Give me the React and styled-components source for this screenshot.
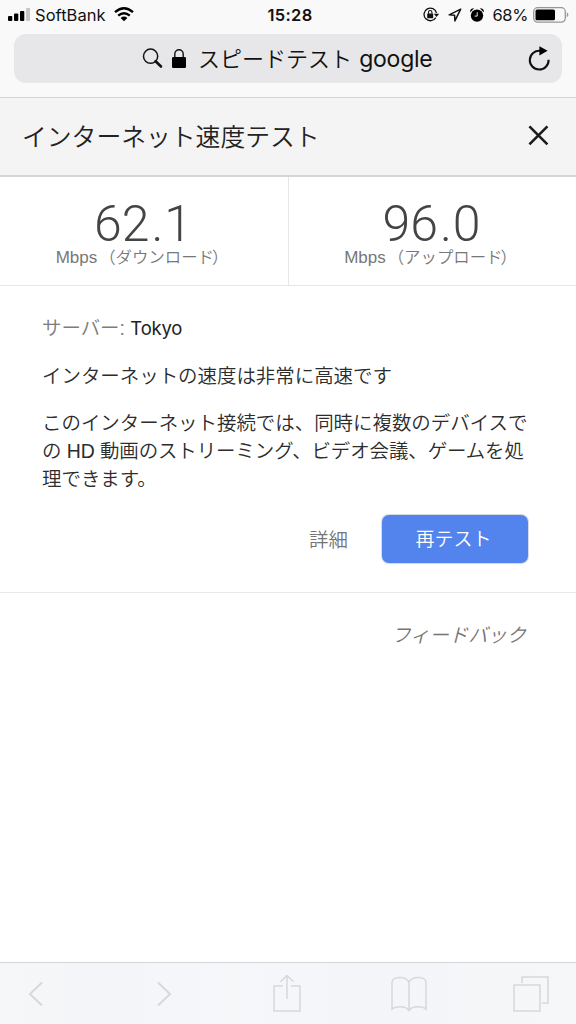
import React from "react";
import styled, { createGlobalStyle } from "styled-components";

const Global = createGlobalStyle`
  * { box-sizing: border-box; }
  body { margin: 0; background: #fff; }
`;

const Screen = styled.div`
  width: 576px;
  height: 1024px;
  display: flex;
  flex-direction: column;
  overflow: hidden;
  background: #fff;
  color: #2c2c2c;
  font-family: "Liberation Sans", "Noto Sans CJK JP", sans-serif;
  font-weight: 350;
  svg { display: block; flex: none; }
`;

const BrowserBar = styled.header`
  height: 98px;
  background: #f9f9f9;
  border-bottom: 1px solid #d3d5d7;
  font-family: Inter, "Noto Sans CJK JP", sans-serif;
  color: #111;
`;

const StatusBar = styled.div`
  height: 34px;
  padding: 0 7px 5px 8px;
  display: grid;
  grid-template-columns: 1fr auto 1fr;
  align-items: center;
  font-size: 16.5px;
  font-weight: 400;
`;

const StatusGroup = styled.div`
  display: flex;
  align-items: center;
  justify-content: ${(p) => (p.$end ? "flex-end" : "flex-start")};
`;

const Carrier = styled.span`
  margin: 0 8px 0 5px;
  letter-spacing: 0.05px;
`;

const Clock = styled.span`
  font-size: 16.5px;
  font-weight: 600;
  letter-spacing: 0.35px;
  padding-left: 3px;
`;

const Percent = styled.span`
  margin: 0 5px 0 8px;
  letter-spacing: -0.35px;
`;

const AddressField = styled.div`
  height: 49px;
  margin: 0 14px;
  padding: 0 10px 0 128px;
  border-radius: 12px;
  background: #e7e7e9;
  display: flex;
  align-items: center;
`;

const Query = styled.span`
  flex: 1;
  margin-left: 12px;
  padding-top: 1px;
  font-size: 22px;
  font-weight: 350;
  line-height: 49px;
  white-space: pre;
`;

const QueryWord = styled.span`
  margin-left: 1px;
  font-size: 23px;
  font-weight: 400;
  letter-spacing: -0.25px;
`;

const TitleBar = styled.div`
  height: 79px;
  padding: 1px 27px 0 22px;
  display: flex;
  align-items: center;
  justify-content: space-between;
  background: #f4f4f4;
  border-bottom: 2px solid #d6d6d6;
`;

const Title = styled.h1`
  margin: 0;
  padding-top: 2px;
  font-size: 24.8px;
  font-weight: 350;
  line-height: 36px;
  color: #222;
`;

const Metrics = styled.section`
  height: 109px;
  display: grid;
  grid-template-columns: 1fr 1fr;
  border-bottom: 1px solid #e6e6e6;
`;

const Metric = styled.div`
  padding-top: 25px;
  display: flex;
  flex-direction: column;
  align-items: center;
  border-left: ${(p) => (p.$divided ? "1px solid #e6e6e6" : "0")};
`;

const Speed = styled.div`
  height: 43px;
  margin-left: -2px;
  font-family: Roboto, sans-serif;
  font-size: 50px;
  font-weight: 300;
  line-height: 44px;
  color: #444;
`;

const Point = styled.span`
  margin: 0 1px 0 2px;
`;

const Unit = styled.div`
  margin-left: -2px;
  font-size: 16.4px;
  line-height: 24px;
  white-space: nowrap;
  color: #777;
`;

const Rate = styled.span`
  margin-right: 2px;
  font-size: 17px;
`;

const UnitEnd = styled.span`
  margin: 0 2px 0 -2px;
`;

const Result = styled.section`
  height: 307px;
  padding: 28px 48px 0 42px;
  border-bottom: 1px solid #e9e9e9;
  font-size: 19.44px;
  line-height: 28px;
`;

const Paragraph = styled.p`
  margin: 0 0 ${(p) => (p.$muted ? 20 : 19)}px;
  white-space: nowrap;
  color: ${(p) => (p.$muted ? "#7c7c7c" : "#2c2c2c")};
`;

const Tight = styled.span`
  letter-spacing: -0.08px;
`;

const Place = styled.span`
  font-family: Inter, sans-serif;
  font-size: 18.5px;
  font-weight: 400;
  letter-spacing: -0.2px;
  color: #222;
`;

const Actions = styled.div`
  margin-top: 22px;
  display: flex;
  align-items: center;
  justify-content: flex-end;
  gap: 34px;
`;

const TextButton = styled.button`
  padding: 2px 0 0;
  border: 0;
  background: none;
  font: inherit;
  color: #757575;
`;

const PrimaryButton = styled(TextButton)`
  width: 146px;
  height: 48px;
  padding: 2px 3px 0 0;
  border-radius: 7px;
  background: #5383ec;
  box-shadow: 0 0 0 1px #d5dae5;
  font-size: 19px;
  color: #fff;
`;

const Feedback = styled.div`
  flex: 1;
  padding: 29px 50px 0 0;
  text-align: right;
  font-size: 19.3px;
  line-height: 28px;
  font-style: italic;
  color: #757575;
`;

const Toolbar = styled.nav`
  height: 62px;
  display: grid;
  grid-template-columns: 72px 184px 62px 182px 62px;
  align-items: center;
  justify-items: center;
  background: linear-gradient(90deg, #f6f7f8, #f3f5f9 18%, #f6f7f9 40%, #f3f5f9 65%, #f6f7f8);
  border-top: 1px solid #d3d5d7;
`;

const ToolIcon = styled.svg`
  fill: none;
  stroke: #d6d8db;
  stroke-width: ${(p) => (p.$bold ? 2 : 1.5)};
`;

const Signal = () => (
  <svg width="22" height="13" viewBox="0 0 22 13">
    <rect x="0" y="8" width="4.3" height="5" rx="1" />
    <rect x="6" y="5.5" width="4.3" height="7.5" rx="1" />
    <rect x="12" y="3" width="4.3" height="10" rx="1" />
    <rect x="18" y="0" width="4.3" height="13" rx="1" fill="#c7c7c7" />
  </svg>
);

const Wifi = () => (
  <svg width="20" height="15" viewBox="0 0 20 15" fill="none" stroke="#000" strokeWidth="2.4">
    <path d="M1 5.2Q10-2.6 19 5.2M4.2 8.7Q10 3.8 15.8 8.7" />
    <path d="M10 14.3 6.6 10.9Q10 8 13.4 10.9Z" fill="#000" stroke="none" />
  </svg>
);

const RotationLock = () => (
  <svg width="17" height="15" viewBox="0 0 17 15" fill="none" stroke="#111" strokeWidth="1.3">
    <path d="M12.8 10.6A6.3 6.3 0 1 1 13.5 6" />
    <path d="M10.8 6.8h5.4l-2.7 3.1Z" fill="#111" stroke="none" />
    <rect x="4.2" y="6.5" width="6" height="4.8" rx=".6" fill="#111" stroke="none" />
    <path d="M5.5 6.8V5.2a1.7 1.7 0 0 1 3.4 0v1.6" strokeWidth="1.1" />
  </svg>
);

const LocationArrow = styled.svg`
  margin-left: 8px;
`;

const Location = () => (
  <LocationArrow width="14" height="14" viewBox="0 0 14 14" fill="none" stroke="#111" strokeWidth="1.5" strokeLinejoin="round">
    <path d="M12.7 1.2 1.2 6.8l5.4.5.3 5.6Z" />
  </LocationArrow>
);

const AlarmClock = styled.svg`
  margin-left: 8px;
`;

const Alarm = () => (
  <AlarmClock width="14" height="16" viewBox="0 0 14 16">
    <circle cx="7" cy="8.6" r="6.2" />
    <path d="M.2 5.2Q-.4 1.4 4.2 1.3ZM13.8 5.2Q14.4 1.4 9.8 1.3Z" />
    <path d="M7.2 5.2v3.9H4.6" fill="none" stroke="#fff" strokeWidth=".9" />
  </AlarmClock>
);

const Battery = () => (
  <svg width="36" height="16" viewBox="0 0 36 16">
    <rect x=".7" y=".7" width="31.6" height="14.4" rx="4" fill="none" stroke="#969696" strokeWidth="1.3" />
    <rect x="2.5" y="2.5" width="19.5" height="10.8" rx="1.6" />
    <path d="M33.8 5.2q3.3 2.6 0 5.4Z" fill="#969696" />
  </svg>
);

const Search = () => (
  <svg width="21" height="21" viewBox="0 0 21 21" fill="none" stroke="#111">
    <circle cx="8.6" cy="8.2" r="7.1" strokeWidth="1.5" />
    <path d="m13.6 13.2 5.4 5.3" strokeWidth="2.6" strokeLinecap="round" />
  </svg>
);

const PadlockShape = styled.svg`
  margin-left: 9px;
`;

const Padlock = () => (
  <PadlockShape width="14" height="20" viewBox="0 0 14 20">
    <rect x="0" y="8" width="14" height="11" rx="1.3" />
    <path d="M2.8 8.5V5a4.2 4.2 0 0 1 8.4 0v3.5" fill="none" stroke="#111" strokeWidth="1.4" />
  </PadlockShape>
);

const Reload = () => (
  <svg width="26" height="26" viewBox="0 0 26 26">
    <path d="M22.6 13.8A9.4 9.4 0 1 1 14.2 4.8" fill="none" stroke="#111" strokeWidth="2.1" />
    <path d="M13.4 .2 21.6 4.8 13.4 9.4Z" />
  </svg>
);

const Close = () => (
  <svg width="21" height="24" viewBox="0 0 21 24" stroke="#1c1c1c" strokeWidth="2.6">
    <path d="m1.4 1.3 18 18M19.4 1.3l-18 18" />
  </svg>
);

export default function App() {
  return (
    <Screen>
      <Global />
      <BrowserBar>
        <StatusBar>
          <StatusGroup>
            <Signal />
            <Carrier>SoftBank</Carrier>
            <Wifi />
          </StatusGroup>
          <Clock>15:28</Clock>
          <StatusGroup $end>
            <RotationLock />
            <Location />
            <Alarm />
            <Percent>68%</Percent>
            <Battery />
          </StatusGroup>
        </StatusBar>
        <AddressField>
          <Search />
          <Padlock />
          <Query>
            スピードテスト <QueryWord>google</QueryWord>
          </Query>
          <Reload />
        </AddressField>
      </BrowserBar>

      <TitleBar>
        <Title>インターネット速度テスト</Title>
        <Close />
      </TitleBar>

      <Metrics>
        <Metric>
          <Speed>
            62<Point>.</Point>1
          </Speed>
          <Unit>
            <Rate>Mbps</Rate>（ダウンロード<UnitEnd>）</UnitEnd>
          </Unit>
        </Metric>
        <Metric $divided>
          <Speed>
            96<Point>.</Point>0
          </Speed>
          <Unit>
            <Rate>Mbps</Rate>（アップロード<UnitEnd>）</UnitEnd>
          </Unit>
        </Metric>
      </Metrics>

      <Result>
        <Paragraph $muted>
          サーバー: <Place>Tokyo</Place>
        </Paragraph>
        <Paragraph>インターネットの速度は非常に高速です</Paragraph>
        <Paragraph>
          このインターネット接続では、同時に複数のデバイスで
          <br />
          <Tight>の HD 動画のストリーミング、ビデオ会議、ゲームを処</Tight>
          <br />
          理できます。
        </Paragraph>
        <Actions>
          <TextButton>詳細</TextButton>
          <PrimaryButton>再テスト</PrimaryButton>
        </Actions>
      </Result>

      <Feedback>フィードバック</Feedback>

      <Toolbar>
        <ToolIcon $bold width="16" height="26" viewBox="0 0 16 26">
          <path d="M14 1.5 2 13l12 11.5" />
        </ToolIcon>
        <ToolIcon $bold width="16" height="26" viewBox="0 0 16 26">
          <path d="M2 1.5 14 13 2 24.5" />
        </ToolIcon>
        <ToolIcon width="28" height="38" viewBox="0 0 28 38">
          <path d="M10 11H1v25h26V11h-9M14 24V0M7.5 6.8 14 .5l6.5 6.3" />
        </ToolIcon>
        <ToolIcon width="36" height="36" viewBox="0 0 36 36">
          <path d="M18 6C14-.5 2 .8 1 6v27.3C4 30.5 14 29 18 34.5 22 29 32 30.5 35 33.3V6C34 .8 22-.5 18 6v28.5" />
        </ToolIcon>
        <ToolIcon width="36" height="36" viewBox="0 0 36 36">
          <path d="M1 9h26v26H1ZM9 7V1h26v26h-6" />
        </ToolIcon>
      </Toolbar>
    </Screen>
  );
}
